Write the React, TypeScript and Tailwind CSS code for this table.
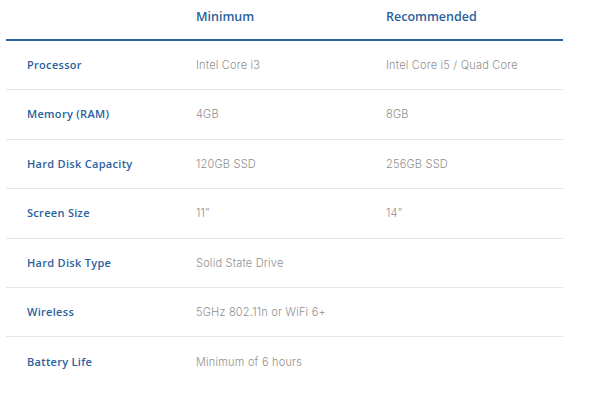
import React from "react";

const rows: [string, string, string][] = [
  ["Processor", "Intel Core i3", "Intel Core i5 / Quad Core"],
  ["Memory (RAM)", "4GB", "8GB"],
  ["Hard Disk Capacity", "120GB SSD", "256GB SSD"],
  ["Screen Size", "11\"", "14\""],
  ["Hard Disk Type", "Solid State Drive", ""],
  ["Wireless", "5GHz 802.11n or WiFi 6+", ""],
  ["Battery Life", "Minimum of 6 hours", ""],
];

export default function App() {
  return (
    <div className="w-[589px] h-[395px] bg-white overflow-hidden">
      <div className="ml-[6px] w-[557px]">
        <div className="grid grid-cols-[190px_190px_1fr] h-[41px] items-center pb-[5px] border-b-2 border-[#2b5f9e]">
          <div />
          <div className="text-[12.5px] font-semibold text-[#2b5f9e] font-['Open_Sans',sans-serif]">Minimum</div>
          <div className="text-[12.5px] font-semibold text-[#2b5f9e] font-['Open_Sans',sans-serif]">Recommended</div>
        </div>
        {rows.map((r, i) => (
          <div
            key={i}
            className={`grid grid-cols-[190px_190px_1fr] h-[49.4px] items-center ${i < rows.length - 1 ? "border-b border-[#e6e6e6]" : ""}`}
          >
            <div className="pl-[21px] text-[11px] font-semibold tracking-[0.3px] text-[#2b5f9e] font-['Open_Sans',sans-serif]">{r[0]}</div>
            <div className="text-[11px] font-light tracking-[0.2px] text-[#8f8f8f] font-['Inter',sans-serif]">{r[1]}</div>
            <div className="text-[11px] font-light tracking-[0.2px] text-[#8f8f8f] font-['Inter',sans-serif]">{r[2]}</div>
          </div>
        ))}
      </div>
    </div>
  );
}
